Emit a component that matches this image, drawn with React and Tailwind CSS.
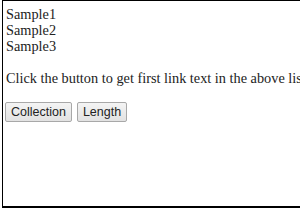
export default function App() {
  return (
    <div className="w-[300px] h-[210px] bg-white overflow-hidden">
      <div className="ml-[2px] w-[320px] h-[208px] border-l border-t border-b-2 border-black pl-[3px] pt-[5px] font-['Liberation_Serif',serif] text-[14.3px] leading-[16px] text-[#222]">
        <div>Sample1</div>
        <div>Sample2</div>
        <div>Sample3</div>
        <p className="mt-[16px] whitespace-nowrap">Click the button to get first link text in the above list</p>
        <div className="mt-[16px] -ml-[1px] flex gap-[5px] font-['Liberation_Sans',sans-serif] text-[12.5px] leading-[15px]">
          <button className="h-[20px] px-[5px] border border-[#a8a8a8] bg-gradient-to-b from-[#f4f4f4] to-[#e2e2e2] rounded-[2px] text-[#222]">Collection</button>
          <button className="h-[20px] px-[5px] border border-[#a8a8a8] bg-gradient-to-b from-[#f4f4f4] to-[#e2e2e2] rounded-[2px] text-[#222]">Length</button>
        </div>
      </div>
    </div>
  );
}
